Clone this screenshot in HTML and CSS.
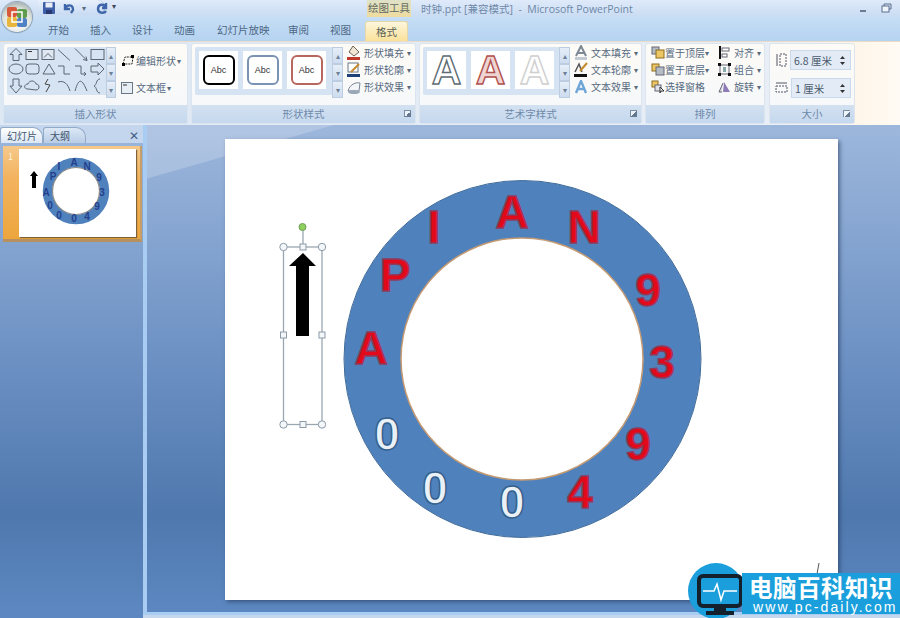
FILE: index.html
```html
<!DOCTYPE html>
<html lang="zh-CN">
<head>
  <meta charset="UTF-8" />
  <title>时钟.ppt [兼容模式] - Microsoft PowerPoint</title>
  <link rel="stylesheet" href="styles.css">
</head>
<body>

<header class="titlebar">
  <div class="qat">
    <svg width="14" height="14" viewBox="0 0 14 14"><rect x="1" y="1" width="12" height="12" rx="1" fill="#3f5fa8"/><rect x="3.5" y="1.5" width="7" height="5" fill="#e9eef7"/><rect x="4" y="9" width="6" height="4" fill="#27396e"/></svg>
    <svg width="16" height="14" viewBox="0 0 16 14"><path d="M4 3 L4 8 L9 8 M4 8 C6 3 12 3 12 9 L10 12" fill="none" stroke="#3e66a8" stroke-width="2.4"/></svg>
    <span class="caret">▾</span>
    <svg class="redo" width="14" height="14" viewBox="0 0 14 14"><path d="M11 2 L11 7 L7 7 M11 7 C9 2 3 3 3 8 C3 12 9 13 11 10" fill="none" stroke="#3e66a8" stroke-width="2.4"/></svg>
  </div>
  <span class="qat-more">▾</span>
  <div class="context-head">绘图工具</div>
  <div class="doc-title">时钟.ppt [兼容模式] &nbsp;-&nbsp; Microsoft PowerPoint</div>
  <div class="win-btns">
    <span class="win-min"></span>
    <svg width="11" height="10" viewBox="0 0 11 10"><rect x="1" y="3" width="7" height="6" fill="#eef4fb" stroke="#5b6f8c"/><path d="M3 3 V1 H10 V6 H8" fill="none" stroke="#5b6f8c"/></svg>
  </div>
</header>

<nav class="tabs">
  <span class="tab t1">开始</span>
  <span class="tab t2">插入</span>
  <span class="tab t3">设计</span>
  <span class="tab t4">动画</span>
  <span class="tab t5">幻灯片放映</span>
  <span class="tab t6">审阅</span>
  <span class="tab t7">视图</span>
  <span class="tab active">格式</span>
</nav>

<div class="ribbon">

  <section class="group g-shapes">
    <div class="group-body">
      <div class="gallery shape-gallery">
        <svg class="shape-grid" width="98" height="48" viewBox="0 0 98 48" fill="none" stroke="#5a6673">
          <g transform="translate(0 -1.5)">
            <path d="M8 3 L14 9 H11 V15 H5 V9 H2 Z"/>
            <rect x="18" y="4" width="12" height="10" fill="#dfe7f2"/><path d="M20 6 H24" stroke="#333"/>
            <rect x="34" y="4" width="12" height="10" fill="#dfe7f2"/><path d="M36 12 L40 8 L44 12"/>
            <path d="M50 4 L62 15"/>
            <path d="M67 3 L79 15 M79 15 L75 14 M79 15 L78 11"/>
            <rect x="83" y="4" width="13" height="10"/>
          </g>
          <ellipse cx="8" cy="22" rx="7" ry="5"/>
          <rect x="18" y="17" width="13" height="10" rx="3"/>
          <path d="M41 17 L47 27 H35 Z"/>
          <path d="M50 19 H56 V27 H62"/>
          <path d="M67 19 H73 V27 H78 M78 27 L76 25 M78 27 L76 29"/>
          <path d="M83 19 H90 V16 L96 22 L90 28 V25 H83 Z"/>
          <path d="M5 32 H11 V39 H14 L8 46 L2 39 H5 Z"/>
          <path d="M20 42 C15 42 16 37 20 37 C21 33 27 33 28 37 C32 37 32 43 28 43 Z"/>
          <path d="M40 32 L37 37 L42 38 L38 45" stroke="#444"/>
          <path d="M50 35 C56 33 60 37 62 44"/>
          <path d="M67 44 C71 30 74 32 79 44"/>
          <path d="M92 32 C88 32 89 38 86 39 C89 40 88 46 92 46"/>
        </svg>
        <div class="scroll"><i>▴</i><i>▾</i><i>▾</i></div>
      </div>
      <div class="edit-btns">
        <div class="cmd">
          <svg width="14" height="13" viewBox="0 0 14 13"><path d="M2 10 L4 3 H12 L11 10 Z" fill="none" stroke="#222" stroke-dasharray="2 1"/><rect x="1" y="9" width="3" height="3"/><rect x="10" y="1" width="3" height="3"/></svg>
          编辑形状 <span class="caret">▾</span>
        </div>
        <div class="cmd">
          <svg width="14" height="12" viewBox="0 0 14 12"><rect x=".5" y=".5" width="11" height="11" fill="#e8eef6" stroke="#6a7686"/><path d="M2 3 H6" stroke="#333"/></svg>
          文本框 <span class="caret">▾</span>
        </div>
      </div>
    </div>
    <div class="group-label">插入形状</div>
  </section>

  <section class="group g-style">
    <div class="group-body">
      <div class="gallery">
        <div class="tile"><span class="abc abc-black">Abc</span></div>
        <div class="tile"><span class="abc abc-blue">Abc</span></div>
        <div class="tile"><span class="abc abc-red">Abc</span></div>
        <div class="scroll"><i>▴</i><i>▾</i><i>▾</i></div>
      </div>
      <div class="menu">
        <div class="cmd">
          <svg width="14" height="15" viewBox="0 0 14 15"><path d="M6 1 L12 7 L7 11 L2 7 Z" fill="#f1e6d3" stroke="#6d6355"/><rect x="0" y="12" width="13" height="3" fill="#c0392b"/></svg>
          形状填充 <span class="caret">▾</span>
        </div>
        <div class="cmd">
          <svg width="14" height="15" viewBox="0 0 14 15"><rect x="1" y="1" width="10" height="9" fill="#fff" stroke="#6a7686"/><path d="M4 10 L12 2" stroke="#c68a2d" stroke-width="2"/><rect x="0" y="12" width="13" height="3" fill="#1f3f77"/></svg>
          形状轮廓 <span class="caret">▾</span>
        </div>
        <div class="cmd">
          <svg width="14" height="14" viewBox="0 0 14 14"><path d="M1 11 C3 4 9 2 13 3 L12 11 Z" fill="#f3f5f8" stroke="#7b8594"/><ellipse cx="7" cy="12" rx="6" ry="2" fill="#9aa7b6"/></svg>
          形状效果 <span class="caret">▾</span>
        </div>
      </div>
    </div>
    <div class="group-label">形状样式<span class="launcher"></span></div>
  </section>

  <section class="group g-art">
    <div class="group-body">
      <div class="gallery">
        <div class="tile"><span class="big-a a-gray">A</span></div>
        <div class="tile"><span class="big-a a-red">A</span></div>
        <div class="tile"><span class="big-a a-light">A</span></div>
        <div class="scroll"><i>▴</i><i>▾</i><i>▾</i></div>
      </div>
      <div class="menu">
        <div class="cmd">
          <svg width="14" height="15" viewBox="0 0 14 15"><path d="M2 11 L7 1 L12 11 M4 8 H10" fill="none" stroke="#7d8894" stroke-width="2"/><rect x="1" y="12" width="12" height="3" fill="#c3cad3"/></svg>
          文本填充 <span class="caret">▾</span>
        </div>
        <div class="cmd">
          <svg width="14" height="15" viewBox="0 0 14 15"><path d="M1 10 L5 2 L8 10" fill="none" stroke="#555" stroke-width="1.5"/><path d="M6 9 L13 1" stroke="#c68a2d" stroke-width="2"/><rect x="0" y="12" width="13" height="3" fill="#111"/></svg>
          文本轮廓 <span class="caret">▾</span>
        </div>
        <div class="cmd">
          <svg width="14" height="14" viewBox="0 0 14 14"><path d="M2 13 L7 1 L12 13 M4 9 H10" fill="none" stroke="#6fa6d8" stroke-width="2.4"/></svg>
          文本效果 <span class="caret">▾</span>
        </div>
      </div>
    </div>
    <div class="group-label">艺术字样式<span class="launcher"></span></div>
  </section>

  <section class="group g-arrange">
    <div class="group-body">
      <div class="menu arrange-left">
        <div class="cmd">
          <svg width="14" height="13" viewBox="0 0 14 13"><rect x="1" y="1" width="7" height="7" fill="#b4bcc6" stroke="#667"/><rect x="5" y="4" width="8" height="8" fill="#eec765" stroke="#8c6d1f"/></svg>
          置于顶层 <span class="caret">▾</span>
        </div>
        <div class="cmd">
          <svg width="14" height="13" viewBox="0 0 14 13"><rect x="1" y="1" width="7" height="7" fill="#eec765" stroke="#8c6d1f"/><rect x="5" y="4" width="8" height="8" fill="#b4bcc6" stroke="#667"/></svg>
          置于底层 <span class="caret">▾</span>
        </div>
        <div class="cmd">
          <svg width="14" height="14" viewBox="0 0 14 14"><rect x="1" y="1" width="6" height="6" fill="#eec765" stroke="#8c6d1f"/><rect x="4" y="5" width="6" height="6" fill="#dfe3e8" stroke="#667"/><path d="M9 7 L13 11 L10 11 L9 13 Z" fill="#fff" stroke="#333"/></svg>
          选择窗格
        </div>
      </div>
      <div class="menu arrange-right">
        <div class="cmd">
          <svg width="13" height="13" viewBox="0 0 13 13"><path d="M2 0 V13" stroke="#111" stroke-width="2"/><rect x="4" y="2" width="7" height="3" fill="#fff" stroke="#667"/><rect x="4" y="8" width="5" height="3" fill="#fff" stroke="#667"/></svg>
          对齐 <span class="caret">▾</span>
        </div>
        <div class="cmd">
          <svg width="13" height="13" viewBox="0 0 13 13"><rect x="2" y="2" width="9" height="9" fill="none" stroke="#667"/><g fill="#111"><rect width="3" height="3"/><rect x="10" width="3" height="3"/><rect y="10" width="3" height="3"/><rect x="10" y="10" width="3" height="3"/></g><rect x="5" y="4" width="3" height="5" fill="#8aa"/></svg>
          组合 <span class="caret">▾</span>
        </div>
        <div class="cmd">
          <svg width="13" height="13" viewBox="0 0 13 13"><path d="M6 2 L12 12 H5 Z" fill="#8d7bb5"/><path d="M5 3 L1 12 H4" fill="#d9dde3" stroke="#667"/></svg>
          旋转 <span class="caret">▾</span>
        </div>
      </div>
    </div>
    <div class="group-label">排列</div>
  </section>

  <section class="group g-size">
    <div class="group-body size-body">
      <div class="size-row">
        <svg width="12" height="14" viewBox="0 0 12 14" fill="none" stroke="#556"><rect x="5" y="1" width="6" height="12" stroke-dasharray="2 1"/><path d="M2 1 V13"/></svg>
        <div class="spin"><span>6.8 厘米</span>
          <svg width="5" height="11" viewBox="0 0 5 11" fill="#333"><path d="M2.5 1 L5 4 H0 Z M2.5 10 L0 7 H5 Z"/></svg>
        </div>
      </div>
      <div class="size-row">
        <svg width="13" height="13" viewBox="0 0 13 13" fill="none" stroke="#556"><rect x="1" y="4" width="11" height="6" stroke-dasharray="2 1"/><path d="M1 1 H12"/></svg>
        <div class="spin"><span>1 厘米</span>
          <svg width="5" height="11" viewBox="0 0 5 11" fill="#333"><path d="M2.5 1 L5 4 H0 Z M2.5 10 L0 7 H5 Z"/></svg>
        </div>
      </div>
    </div>
    <div class="group-label">大小<span class="launcher"></span></div>
  </section>

</div>

<main class="workspace">

  <aside class="side">
    <div class="side-tabs">
      <span class="side-tab on">幻灯片</span>
      <span class="side-tab">大纲</span>
      <span class="side-close">✕</span>
    </div>
    <div class="thumb-row">
      <span class="thumb-num">1</span>
      <div class="thumb">
        <svg width="117" height="88" viewBox="0 0 117 88">
          <path d="M13 39 V27 H11 L15 22 L19 27 H17 V39 Z" fill="#000"/>
          <circle cx="57" cy="42" r="28.5" fill="none" stroke="#4f81bd" stroke-width="9.5"/>
          <circle cx="57" cy="42" r="23.5" fill="#fff" stroke="#888" stroke-width="1.2"/>
          <g class="thumb-letters" text-anchor="middle">
            <text x="27" y="47">A</text><text x="34" y="31">P</text><text x="40" y="21">I</text>
            <text x="55" y="17">A</text><text x="68" y="21">N</text><text x="80" y="32">9</text>
            <text x="83" y="47">3</text><text x="78" y="61">9</text><text x="68" y="71">4</text>
            <text class="pale" x="55" y="73">0</text><text class="pale" x="40" y="70">0</text><text class="pale" x="31" y="60">0</text>
          </g>
        </svg>
      </div>
    </div>
  </aside>

  <div class="stage">
    <div class="slide">
      <svg class="slide-art" width="613" height="461" viewBox="225 139 613 461">
        <circle cx="522.5" cy="359" r="149.5" fill="none" stroke="#4f81bd" stroke-width="57.5"/>
        <circle cx="522.5" cy="359" r="178.5" fill="none" stroke="#3e6a99" stroke-width="1"/>
        <circle cx="522" cy="359" r="121" fill="#fff" stroke="#c49a72" stroke-width="1.5"/>

        <g class="ring-text red" text-anchor="middle">
          <text x="371" y="364">A</text>
          <text x="395" y="291">P</text>
          <text x="434" y="243">I</text>
          <text x="512" y="228">A</text>
          <text x="584" y="243">N</text>
          <text x="648" y="306">9</text>
          <text x="662" y="378">3</text>
          <text x="638" y="460">9</text>
          <text x="580" y="508">4</text>
        </g>
        <g class="ring-text pale" text-anchor="middle">
          <text x="512" y="518">0</text>
          <text x="435" y="504">0</text>
          <text x="387" y="450">0</text>
        </g>

        <!-- выделенная стрелка -->
        <path d="M303 253 L316 266 H309 V336 H296 V266 H289 Z" fill="#000"/>
        <rect class="sel" x="283.5" y="247" width="38.5" height="177.5"/>
        <path class="sel" d="M303 247 V230"/>
        <circle cx="302.5" cy="227" r="3.5" fill="#8fd05f" stroke="#6f9f57"/>
        <g class="handle">
          <circle cx="283.5" cy="247" r="3.7"/><circle cx="322" cy="247" r="3.7"/>
          <circle cx="283.5" cy="424.5" r="3.7"/><circle cx="322" cy="424.5" r="3.7"/>
          <rect x="300" y="244" width="6" height="6"/><rect x="300" y="421.5" width="6" height="6"/>
          <rect x="280.5" y="332" width="6" height="6"/><rect x="319" y="332" width="6" height="6"/>
        </g>
        <path d="M819 563 L817 574" stroke="#555" stroke-width="1"/>
      </svg>
    </div>
  </div>
</main>

<div class="status-strip"></div>

<!-- логотип поверх скриншота -->
<div class="office-btn">
  <svg width="24" height="24" viewBox="0 0 24 24">
    <rect x="2" y="2" width="10" height="10" rx="2" fill="#d8583b"/>
    <rect x="12" y="4" width="10" height="9" rx="2" fill="#5e9c4e"/>
    <rect x="2" y="12" width="10" height="10" rx="2" fill="#e8b63c"/>
    <rect x="12" y="13" width="10" height="9" rx="2" fill="#4f82c4"/>
    <rect x="7" y="7" width="10" height="10" fill="none" stroke="#fff" stroke-width="1.5"/>
  </svg>
</div>

<div class="watermark">
  <div class="wm-circle">
    <svg width="46" height="42" viewBox="0 0 46 42">
      <rect x="2" y="2" width="42" height="30" rx="4" fill="#1a9fdc" stroke="#14202c" stroke-width="4"/>
      <path d="M6 17 H17 L20 10 L24 26 L27 17 H40" fill="none" stroke="#fff" stroke-width="1.5"/>
      <rect x="17" y="33" width="12" height="5" fill="#14202c"/>
      <rect x="9" y="37" width="28" height="4" fill="#14202c"/>
    </svg>
  </div>
  <div class="wm-band">
    <div class="wm-title">电脑百科知识</div>
    <div class="wm-url">www.pc-daily.com</div>
  </div>
</div>

</body>
</html>
```

FILE: styles.css
```css
* {
  box-sizing: border-box;
}

html, body {
  margin: 0;
  padding: 0;
}

body {
  position: relative;
  width: 900px;
  height: 618px;
  overflow: hidden;
  font-family: "Noto Sans CJK SC", "Liberation Sans", sans-serif;
  font-size: 10.5px;
  color: #56697f;
  background-color: #5c87c0;
}

svg {
  display: block;
  flex: none;
}

.caret {
  font-size: 8px;
  color: #5a6a7c;
}

/* верхняя полоса */
.titlebar {
  display: flex;
  align-items: flex-start;
  height: 17px;
  padding-left: 38px;
  background: linear-gradient(#dfeafa, #c9dcf2);
}

.qat {
  display: flex;
  align-items: center;
  gap: 5px;
  width: 67px;
  height: 15px;
  padding-left: 4px;
  background: linear-gradient(#e8f0fb, #c8dbf3);
  border-radius: 0 9px 9px 0;
  border-right: 1px solid #a9bfdc;
}

.redo {
  margin-left: 4px;
}

.qat-more {
  margin-left: 7px;
  font-size: 8px;
  line-height: 12px;
  color: #445;
}

.context-head {
  width: 44px;
  height: 17px;
  margin-left: 251px;
  font-size: 10.5px;
  line-height: 15px;
  text-align: center;
  color: #5f6a62;
  background: linear-gradient(#dfe2c8, #efdc9e);
}

.doc-title {
  margin-left: 10px;
  font-family: "Open Sans", "Noto Sans CJK SC", sans-serif;
  font-size: 10.5px;
  line-height: 18px;
  color: #6d88a8;
  white-space: nowrap;
}

.win-btns {
  display: flex;
  align-items: center;
  gap: 15px;
  margin-left: auto;
  padding: 3px 8px 0 0;
}

.win-min {
  display: block;
  width: 6px;
  height: 2px;
  margin-top: 6px;
  background-color: #6a7d96;
}

/* вкладки */
.tabs {
  position: relative;
  display: flex;
  height: 24px;
  background: linear-gradient(#c6def6, #b5d2f0);
}

.tab {
  position: absolute;
  top: 5px;
  font-size: 10.5px;
  line-height: 15px;
  color: #4d6885;
}

.t1 { left: 48px; }
.t2 { left: 90px; }
.t3 { left: 132px; }
.t4 { left: 174px; }
.t5 { left: 217px; }
.t6 { left: 288px; }
.t7 { left: 330px; }

.tab.active {
  top: 4px;
  left: 365px;
  width: 43px;
  height: 20px;
  text-align: center;
  line-height: 19px;
  color: #5a5f55;
  background: linear-gradient(#fdf6dc, #fbe29b);
  border: 1px solid #e6d7a8;
  border-bottom: 0;
  border-radius: 3px 3px 0 0;
}

/* лента */
.ribbon {
  display: flex;
  gap: 3px;
  height: 84px;
  padding: 1px 0 1px 3px;
  background: linear-gradient(90deg, #dde8f5 0, #e8eef6 85%, #fff6ea 95%, #fffaf3 100%);
  border-top: 1px solid #e9dcc7;
}

.group {
  display: flex;
  flex-direction: column;
  background: linear-gradient(#fdfbf6, #f4f7fb);
  border: 1px solid #dbe4ef;
  border-radius: 3px;
}

.g-shapes { width: 185px; }
.g-style { width: 225px; }
.g-art { width: 223px; }
.g-arrange { width: 120px; }
.g-size { width: 86px; margin-left: 1px; }

.group-body {
  flex: 1;
  display: flex;
  padding: 3px 3px 0 3px;
}

.group-label {
  position: relative;
  height: 18px;
  font-size: 10.5px;
  line-height: 17px;
  text-align: center;
  color: #6e89aa;
  background: linear-gradient(#d3e1f1, #c5d8ee);
}

.launcher {
  position: absolute;
  right: 4px;
  top: 5px;
  width: 7px;
  height: 7px;
  border: 1px solid #7b8ea6;
  border-width: 1px 0 0 1px;
  background: linear-gradient(135deg, #eef3f9 50%, #66788f 50%);
}

/* галереи */
.gallery {
  display: flex;
  align-items: flex-start;
  gap: 5px;
  height: 48px;
  padding-left: 4px;
  background-color: #d6e3f2;
  border-radius: 2px;
}

.g-style .gallery { width: 148px; }
.g-art .gallery { width: 147px; }

.shape-gallery {
  gap: 0;
  width: 109px;
  padding-left: 1px;
}

.tile {
  display: flex;
  align-items: center;
  justify-content: center;
  width: 39px;
  height: 38px;
  margin-top: 4px;
  background-color: #fff;
}

.scroll {
  display: flex;
  flex-direction: column;
  width: 11px;
  height: 48px;
  margin-left: auto;
}

.scroll i {
  flex: 1;
  font-style: normal;
  font-size: 8px;
  line-height: 15px;
  text-align: center;
  color: #6c7f96;
  background: linear-gradient(#e6eef8, #cddcef);
  border: 1px solid #bccde2;
}

.abc {
  display: block;
  width: 32px;
  height: 30px;
  font-family: "Liberation Sans", sans-serif;
  font-size: 9px;
  line-height: 27px;
  text-align: center;
  color: #333;
  border: 2px solid #000;
  border-radius: 6px;
}

.abc-blue {
  border-color: #7a93b3;
}

.abc-red {
  border-color: #b8675f;
}

.big-a {
  font-family: "Liberation Sans", sans-serif;
  font-weight: bold;
  font-size: 41px;
  line-height: 38px;
  color: #fff;
  -webkit-text-stroke: 1.4px #5d6b74;
}

.a-red {
  color: #eed5d3;
  -webkit-text-stroke-color: #b2504e;
}

.a-light {
  -webkit-text-stroke-color: #cfcfcf;
}

/* команды */
.cmd {
  display: flex;
  align-items: center;
  gap: 3px;
  height: 17px;
  font-size: 10px;
  white-space: nowrap;
}

.menu {
  display: flex;
  flex-direction: column;
  margin: -3px 0 0 4px;
}

.edit-btns {
  display: flex;
  flex-direction: column;
  gap: 10px;
  margin: 5px 0 0 5px;
}

.edit-btns .cmd {
  gap: 1px;
}

.arrange-left {
  margin-left: 2px;
  width: 68px;
}

.arrange-left .cmd {
  gap: 0;
}

.arrange-right {
  margin-left: 0;
}

/* размер */
.size-body {
  flex-direction: column;
  gap: 8px;
  padding: 6px 3px 0 5px;
}

.size-row {
  display: flex;
  align-items: center;
  gap: 3px;
}

.spin {
  display: flex;
  align-items: center;
  justify-content: space-between;
  width: 63px;
  height: 20px;
  padding: 0 5px 0 3px;
  font-size: 10.5px;
  color: #4a5a6c;
  background-color: #e2ebf6;
  border: 1px solid #c9d8ea;
}

/* рабочая область */
.workspace {
  display: flex;
  height: 487px;
  background: linear-gradient(#9db7dc 0, #6f93c5 45%, #4f78ae 80%, #5c87c0 100%);
}

.side {
  width: 147px;
  border-right: 4px solid #a9cdf2;
}

.side-tabs {
  display: flex;
  align-items: flex-end;
  height: 18px;
  padding-top: 2px;
  background-color: #c3d6ed;
}

.side-tab {
  width: 43px;
  height: 16px;
  padding-left: 6px;
  font-size: 10px;
  line-height: 15px;
  color: #42566d;
  background: linear-gradient(#dce8f6, #b9cde6);
  border: 1px solid #93aac7;
  border-bottom: 0;
  border-radius: 3px 10px 0 0;
}

.side-tab.on {
  background: linear-gradient(#fff, #dbe7f5);
}

.side-close {
  margin-left: auto;
  margin-right: 4px;
  font-size: 12px;
  line-height: 16px;
  color: #3f6288;
}

.thumb-row {
  display: flex;
  width: 139px;
  height: 96px;
  margin: 3px 0 0 3px;
  padding: 3px;
  background: linear-gradient(#f5c98b 0, #f3b35f 34%, #eda63d 100%);
  border-bottom: 3px solid #b6915f;
  border-right: 2px solid #c59f6a;
}

.thumb-num {
  width: 13px;
  padding-left: 2px;
  font-size: 9px;
  line-height: 15px;
  color: #fdf3dc;
}

.thumb {
  width: 117px;
  height: 88px;
  background-color: #fff;
  box-shadow: 1px 1px 1px #7d6138;
}

.thumb-letters text {
  font-family: "Liberation Sans", sans-serif;
  font-size: 10px;
  font-weight: bold;
  fill: #24408c;
}

.stage {
  flex: 1;
  padding: 14px 0 0 78px;
  background: linear-gradient(164deg, rgba(255, 255, 255, .2) 51px, transparent 52px);
}

.slide {
  width: 613px;
  height: 461px;
  background-color: #fff;
  box-shadow: 2px 2px 4px rgba(30, 50, 80, .55);
}

.ring-text text {
  font-family: "Liberation Sans", sans-serif;
  font-size: 46px;
  font-weight: bold;
  stroke-width: 1.5px;
}

.ring-text.red text {
  fill: #e20a1a;
  stroke: #8e3a5c;
}

.ring-text.pale text {
  fill: #e9f1f7;
  stroke: #35608c;
}

.sel {
  fill: none;
  stroke: #9aa6b2;
  stroke-width: 1.3;
}

.handle circle, .handle rect {
  fill: #f4f7fa;
  stroke: #8c9aa8;
}

.status-strip {
  position: absolute;
  left: 143px;
  right: 0;
  top: 612px;
  height: 6px;
  background: linear-gradient(#a9cdf2 50%, #c4d7ec 50%);
}

/* кнопка Office */
.office-btn {
  position: absolute;
  left: 2px;
  top: 2px;
  display: flex;
  align-items: center;
  justify-content: center;
  width: 30px;
  height: 30px;
  border-radius: 50%;
  background: radial-gradient(circle at 50% 70%, #fff 0, #dfe3dc 55%, #7c8c90 100%);
  box-shadow: 0 0 1px 1px rgba(110, 130, 150, .7);
}

/* водяной знак */
.watermark {
  position: absolute;
  left: 688px;
  top: 563px;
  width: 212px;
  height: 55px;
}

.wm-circle {
  position: absolute;
  left: 0;
  top: 0;
  width: 56px;
  height: 56px;
  padding: 11px 0 0 9px;
  border-radius: 50%;
  background-color: #1a9fdc;
}

.wm-band {
  position: absolute;
  left: 54px;
  top: 10px;
  width: 158px;
  height: 41px;
  padding-left: 7px;
  background-color: #1a9fdc;
}

.wm-title {
  height: 28px;
  font-size: 23.5px;
  font-weight: bold;
  line-height: 28px;
  letter-spacing: .5px;
  color: #fff;
  white-space: nowrap;
}

.wm-url {
  padding-left: 4px;
  font-family: "Liberation Sans", sans-serif;
  font-size: 14px;
  line-height: 12px;
  letter-spacing: 2.1px;
  color: #fff;
  white-space: nowrap;
}
```
